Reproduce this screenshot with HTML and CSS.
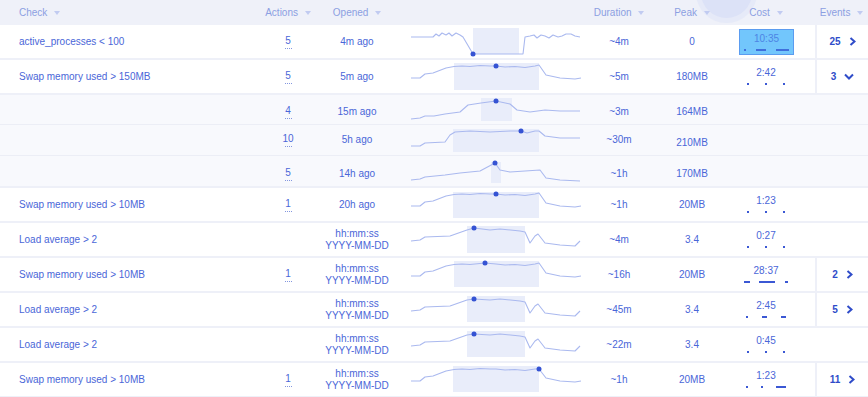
FILE: index.html
```html
<!DOCTYPE html>
<html lang="en">
<head>
  <meta charset="UTF-8">
  <meta name="viewport" content="width=device-width, initial-scale=1.0">
  <title>Open Checks</title>
  <link rel="stylesheet" href="styles.css">
</head>
<body>
  <div class="table">
    <div class="head">
      <span class="blob"></span>
      <div class="th left">Check <i class="caret"></i></div>
      <div class="th">Actions <i class="caret"></i></div>
      <div class="th">Opened <i class="caret"></i></div>
      <div class="th"></div>
      <div class="th">Duration <i class="caret"></i></div>
      <div class="th">Peak <i class="caret"></i></div>
      <div class="th">Cost <i class="caret"></i></div>
      <div class="th"></div>
      <div class="th">Events <i class="caret"></i></div>
    </div>

    <div class="row">
      <div class="check">active_processes &lt; 100</div>
      <div class="actions"><span class="num">5</span></div>
      <div class="opened">4m ago</div>
      <div class="spark">
        <svg width="172" height="33">
          <rect x="63" y="3" width="46" height="26"/>
          <polyline points="1,12 23,12 26,9 29,11 32,8 36,10 39,8 42,11 46,8 50,10 53,12 63,29 113,29 115,12 120,11 124,10 127,13 131,10 135,11 139,13 143,10 148,12 152,11 156,9 161,9 165,11 170,12"/>
          <circle cx="63" cy="29" r="2.5"/>
        </svg>
      </div>
      <div class="cell">~4m</div>
      <div class="cell">0</div>
      <div class="cost selected">
        <span>10:35</span>
        <div class="ticks"><b style="width:2px"></b><b style="width:10px"></b><b style="width:13px"></b></div>
      </div>
      <div></div>
      <div class="events has"><span>25</span><svg class="chev" width="7" height="9"><polyline points="1.5,1 5.5,4.5 1.5,8"/></svg></div>
    </div>

    <div class="row">
      <div class="check">Swap memory used &gt; 150MB</div>
      <div class="actions"><span class="num">5</span></div>
      <div class="opened">5m ago</div>
      <div class="spark">
        <svg width="172" height="33">
          <rect x="44" y="3" width="85" height="27"/>
          <polyline points="1,18 10,18 15,14 23,13 36,8 44,6.5 52,6 60,6.5 70,5.5 80,6 86,6 95,7 105,6.5 115,7.5 125,6 129,5 136,15 150,18 165,19 171,18"/>
          <circle cx="86" cy="6" r="2.5"/>
        </svg>
      </div>
      <div class="cell">~5m</div>
      <div class="cell">180MB</div>
      <div class="cost">
        <span>2:42</span>
        <div class="ticks"><b style="width:2px"></b><b style="width:2px"></b><b style="width:2px"></b></div>
      </div>
      <div></div>
      <div class="events has"><span>3</span><svg class="chev" width="10" height="7"><polyline points="1,1.5 5,5.5 9,1.5"/></svg></div>
    </div>

    <div class="sub">
      <div class="sub-row a">
        <div></div>
        <div class="actions low"><span class="num">4</span></div>
        <div class="opened low">15m ago</div>
        <div class="spark">
          <svg width="172" height="29">
            <rect x="71" y="3" width="31" height="23"/>
            <polyline points="1,24 10,23 15,21 24,21 35,19 50,17 58,10 71,8 86,6 100,9 107,15 120,17 135,15 150,16 170,16"/>
            <circle cx="86" cy="6" r="2.5"/>
          </svg>
        </div>
        <div class="cell low">~3m</div>
        <div class="cell low">164MB</div>
      </div>
      <div class="sub-row b">
        <div></div>
        <div class="actions"><span class="num">10</span></div>
        <div class="opened">5h ago</div>
        <div class="spark">
          <svg width="172" height="30">
            <rect x="43" y="4" width="86" height="23"/>
            <polyline points="1,21 10,21 15,18 35,17 40,10 45,7 60,6 80,7 100,6 111,6 117,8 125,6 129,6 135,11 150,13 170,13"/>
            <circle cx="111" cy="6" r="2.5"/>
          </svg>
        </div>
        <div class="cell">~30m</div>
        <div class="cell low">210MB</div>
      </div>
      <div class="sub-row c">
        <div></div>
        <div class="actions low"><span class="num">5</span></div>
        <div class="opened low">14h ago</div>
        <div class="spark">
          <svg width="172" height="30">
            <rect x="81" y="6" width="10" height="21"/>
            <polyline points="1,24 10,23 15,21 35,19 50,17 70,15 85,7 90,14 100,16 115,15 130,14 136,22 150,24 170,25"/>
            <circle cx="85" cy="7" r="2.5"/>
          </svg>
        </div>
        <div class="cell low">~1h</div>
        <div class="cell low">170MB</div>
      </div>
    </div>

    <div class="row">
      <div class="check">Swap memory used &gt; 10MB</div>
      <div class="actions"><span class="num">1</span></div>
      <div class="opened">20h ago</div>
      <div class="spark">
        <svg width="172" height="33">
          <rect x="43" y="4" width="86" height="26"/>
          <polyline points="1,18 10,18 15,14 23,13 36,8 44,6.5 52,6 60,6.5 70,5.5 80,6 86,6 95,7 105,6.5 115,7.5 125,6 129,5 136,15 150,18 165,19 171,18"/>
          <circle cx="86" cy="6" r="2.5"/>
        </svg>
      </div>
      <div class="cell">~1h</div>
      <div class="cell">20MB</div>
      <div class="cost">
        <span>1:23</span>
        <div class="ticks"><b style="width:2px"></b><b style="width:2px"></b><b style="width:2px"></b></div>
      </div>
      <div></div>
      <div class="events"></div>
    </div>

    <div class="row">
      <div class="check">Load average &gt; 2</div>
      <div class="actions"></div>
      <div class="opened">hh:mm:ss<br>YYYY-MM-DD</div>
      <div class="spark">
        <svg width="172" height="33">
          <rect x="57" y="3" width="58" height="27"/>
          <polyline points="1,18 10,17 15,14 40,13 57,7 64,5 80,7 90,6 110,8 115,9 120,20 125,13 128,11 135,20 150,22 165,23 170,18"/>
          <circle cx="64" cy="5" r="2.5"/>
        </svg>
      </div>
      <div class="cell">~4m</div>
      <div class="cell">3.4</div>
      <div class="cost">
        <span>0:27</span>
        <div class="ticks"><b style="width:2px"></b><b style="width:2px"></b><b style="width:2px"></b></div>
      </div>
      <div></div>
      <div class="events"></div>
    </div>

    <div class="row">
      <div class="check">Swap memory used &gt; 10MB</div>
      <div class="actions"><span class="num">1</span></div>
      <div class="opened">hh:mm:ss<br>YYYY-MM-DD</div>
      <div class="spark">
        <svg width="172" height="33">
          <rect x="44" y="3" width="85" height="26"/>
          <polyline points="1,18 10,18 15,14 23,13 36,8 44,6.5 52,6 60,6.5 70,5.5 75,5 86,6 95,7 105,6.5 115,7.5 125,6 129,5 136,15 150,18 165,19 171,18"/>
          <circle cx="75" cy="5" r="2.5"/>
        </svg>
      </div>
      <div class="cell">~16h</div>
      <div class="cell">20MB</div>
      <div class="cost">
        <span>28:37</span>
        <div class="ticks"><b style="width:6px"></b><b style="width:16px"></b><b style="width:3px"></b></div>
      </div>
      <div></div>
      <div class="events has"><span>2</span><svg class="chev" width="7" height="9"><polyline points="1.5,1 5.5,4.5 1.5,8"/></svg></div>
    </div>

    <div class="row">
      <div class="check">Load average &gt; 2</div>
      <div class="actions"></div>
      <div class="opened">hh:mm:ss<br>YYYY-MM-DD</div>
      <div class="spark">
        <svg width="172" height="33">
          <rect x="57" y="3" width="58" height="26"/>
          <polyline points="1,18 10,17 15,14 40,13 57,7 64,6 80,7 90,6 110,8 115,9 120,20 125,13 128,11 135,20 150,22 165,23 170,18"/>
          <circle cx="64" cy="6" r="2.5"/>
        </svg>
      </div>
      <div class="cell">~45m</div>
      <div class="cell">3.4</div>
      <div class="cost">
        <span>2:45</span>
        <div class="ticks"><b style="width:2px"></b><b style="width:5px"></b><b style="width:5px"></b></div>
      </div>
      <div></div>
      <div class="events has"><span>5</span><svg class="chev" width="7" height="9"><polyline points="1.5,1 5.5,4.5 1.5,8"/></svg></div>
    </div>

    <div class="row">
      <div class="check">Load average &gt; 2</div>
      <div class="actions"></div>
      <div class="opened">hh:mm:ss<br>YYYY-MM-DD</div>
      <div class="spark">
        <svg width="172" height="33">
          <rect x="57" y="3" width="58" height="26"/>
          <polyline points="1,18 10,17 15,14 40,13 57,7 64,6 80,7 90,6 110,8 115,9 120,20 125,13 128,11 135,20 150,22 165,23 170,18"/>
          <circle cx="64" cy="6" r="2.5"/>
        </svg>
      </div>
      <div class="cell">~22m</div>
      <div class="cell">3.4</div>
      <div class="cost">
        <span>0:45</span>
        <div class="ticks"><b style="width:2px"></b><b style="width:2px"></b><b style="width:2px"></b></div>
      </div>
      <div></div>
      <div class="events"></div>
    </div>

    <div class="row">
      <div class="check">Swap memory used &gt; 10MB</div>
      <div class="actions"><span class="num">1</span></div>
      <div class="opened">hh:mm:ss<br>YYYY-MM-DD</div>
      <div class="spark">
        <svg width="172" height="33">
          <rect x="43" y="3" width="86" height="26"/>
          <polyline points="1,18 10,18 15,14 23,13 36,8 44,6.5 52,6 60,6.5 70,5.5 80,6 86,6 95,7 105,6.5 115,7.5 125,6 129,6 136,15 150,18 165,19 171,18"/>
          <circle cx="129" cy="6" r="2.5"/>
        </svg>
      </div>
      <div class="cell">~1h</div>
      <div class="cell">20MB</div>
      <div class="cost">
        <span>1:23</span>
        <div class="ticks"><b style="width:2px"></b><b style="width:2px"></b><b style="width:10px"></b></div>
      </div>
      <div></div>
      <div class="events has"><span>11</span><svg class="chev" width="7" height="9"><polyline points="1.5,1 5.5,4.5 1.5,8"/></svg></div>
    </div>
  </div>
</body>
</html>
```

FILE: styles.css
```css
:root {
  --text: #4a66d8;
  --muted: #8c9fe2;
  --strong: #2f4cc9;
  --gap-color: #eef0f8;
  --head-color: #eff1f9;
  --sub-color: #f8f9fd;
  --sub-line: #eceef6;
  --white: #ffffff;
  --area: #e9edfa;
  --line: #aab9ef;
  --dot: #3553d3;
}

body {
  margin: 0;
  background-color: var(--gap-color);
  font-family: 'Liberation Sans', Arial, sans-serif;
  font-size: 10px;
  color: var(--text);
  overflow: hidden;
}

.table {
  display: flex;
  flex-direction: column;
  gap: 2px;
  width: 868px;
}

.head, .row, .sub-row {
  display: grid;
  grid-template-columns: 262px 52px 86px 192px 54px 92px 56px 21px 53px;
  align-items: center;
}

.head {
  position: relative;
  height: 25px;
  margin-bottom: -2px;
  background-color: var(--head-color);
  overflow: hidden;
}

.blob {
  position: absolute;
  left: 701px;
  top: -33px;
  width: 51px;
  height: 51px;
  border-radius: 50%;
  background-color: #dce2f7;
  box-shadow: 0 0 0 5px rgba(221, 227, 247, 0.5);
}

.th {
  position: relative;
  color: var(--muted);
  text-align: center;
  white-space: nowrap;
}

.th.left {
  text-align: left;
  padding-left: 19px;
}

.caret {
  display: inline-block;
  vertical-align: middle;
  margin-left: 4px;
  border-left: 3px solid transparent;
  border-right: 3px solid transparent;
  border-top: 4px solid #c1cbf1;
}

.row {
  height: 33px;
  background-color: var(--white);
}

.check {
  padding-left: 19px;
  white-space: nowrap;
}

.actions, .opened, .cell {
  text-align: center;
  line-height: 12px;
}

.low {
  padding-top: 5px;
}

.num {
  display: inline-block;
  position: relative;
  line-height: 11px;
  padding-bottom: 3px;
}

.num::after {
  content: '';
  position: absolute;
  left: 50%;
  bottom: 0;
  width: 7px;
  margin-left: -3.5px;
  border-bottom: 1px dotted #8396df;
}

.spark {
  height: 100%;
  padding-left: 10px;
}

.spark svg {
  display: block;
}

.spark rect {
  fill: var(--area);
}

.spark polyline {
  fill: none;
  stroke: var(--line);
  stroke-width: 1.1;
  stroke-linejoin: round;
}

.spark circle {
  fill: var(--dot);
}

.cost {
  display: flex;
  flex-direction: column;
  align-items: center;
  gap: 5px;
  line-height: 11px;
  padding-bottom: 2px;
}

.cost.selected {
  align-self: center;
  height: 26px;
  margin-left: 1px;
  box-sizing: border-box;
  justify-content: center;
  background-color: #72c6fc;
  border: 1px solid #5b9cf0;
  color: #4d84e4;
  padding-bottom: 0;
}

.ticks {
  display: flex;
  width: 54px;
}

.ticks b {
  display: block;
  height: 2px;
  margin: 0 auto;
  background-color: #3b58d4;
}

.cost.selected .ticks b {
  background-color: #3f6fdc;
}

.events {
  align-self: stretch;
  display: flex;
  align-items: center;
  justify-content: center;
  gap: 8px;
  font-weight: bold;
  color: var(--strong);
}

.events.has {
  border-left: 2px solid var(--gap-color);
}

.chev polyline {
  fill: none;
  stroke: var(--strong);
  stroke-width: 2;
}

.sub {
  display: flex;
  flex-direction: column;
  gap: 1px;
  background-color: var(--sub-line);
}

.sub-row {
  background-color: var(--sub-color);
}

.sub-row.a {
  height: 29px;
}

.sub-row.b, .sub-row.c {
  height: 30px;
}
```
